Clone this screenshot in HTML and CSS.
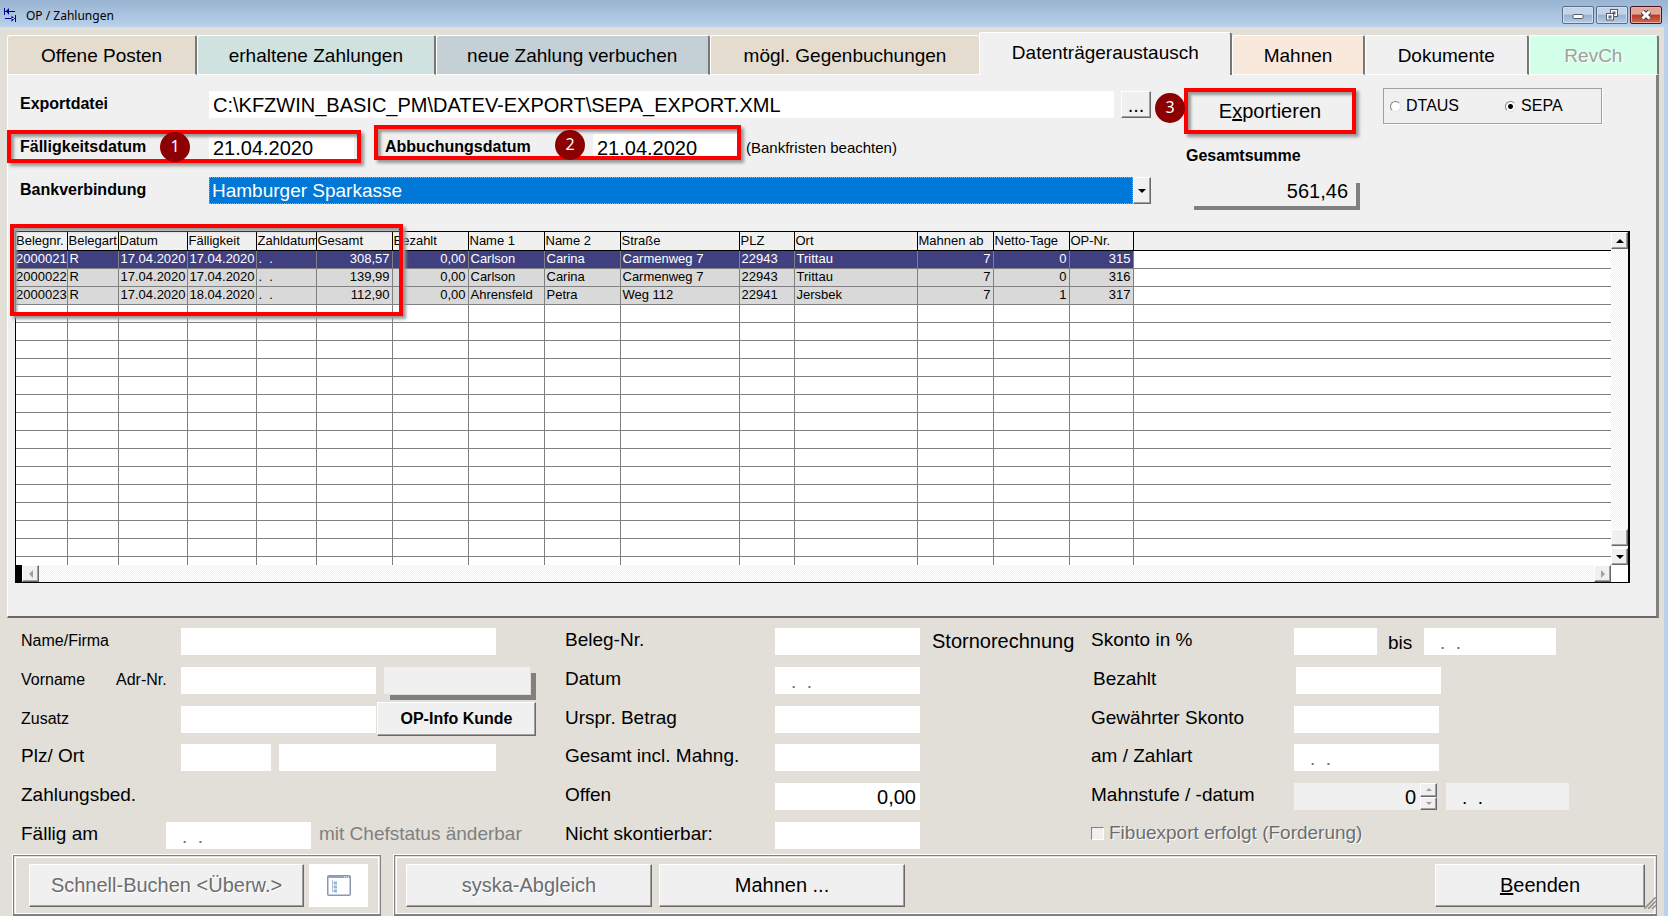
FILE: index.html
```html
<!DOCTYPE html>
<html lang="de">
<head>
<meta charset="utf-8">
<title>OP / Zahlungen</title>
<link rel="stylesheet" href="styles.css">
</head>
<body>
<header class="titlebar">
  <svg class="app-icon" viewBox="0 0 14 14" width="14" height="14" fill="#00008b">
    <path d="M1 0h1v7H1zM2 3h10v1H2zM3 3l3-3v7zM12 7h1v7h-1zM2 10h10v1H2zM11.500 10.500l-3-3v6.500z"/>
  </svg>
  <h1 class="title">OP / Zahlungen</h1>
  <div class="win-buttons">
    <button class="win" aria-label="Minimieren"><svg width="12" height="10" viewBox="0 0 12 10"><rect x="1" y="4.500" width="10" height="4" rx="1" fill="#fff" stroke="#555b6b"/></svg></button>
    <button class="win" aria-label="Wiederherstellen"><svg width="14" height="12" viewBox="0 0 14 12" fill="#fff" stroke="#555b6b"><rect x="5.500" y=".5" width="7" height="7"/><rect x="8" y="3" width="2" height="2" fill="#8fa9c8"/><rect x="1.500" y="4.500" width="7" height="6.500"/><rect x="4" y="7" width="2" height="2" fill="#8fa9c8"/></svg></button>
    <button class="win win-close" aria-label="Schließen"><svg width="12" height="10" viewBox="0 0 12 10"><path d="M2.500 1.500l7 7M9.500 1.500l-7 7" stroke="#4a3a48" stroke-width="5"/><path d="M2.500 1.500l7 7M9.500 1.500l-7 7" stroke="#fff" stroke-width="3"/></svg></button>
  </div>
</header>

<main class="window">
  <nav class="tabs" role="tablist">
    <button role="tab" class="tab sand">Offene Posten</button>
    <button role="tab" class="tab teal">erhaltene Zahlungen</button>
    <button role="tab" class="tab steel">neue Zahlung verbuchen</button>
    <button role="tab" class="tab sand no-edge">mögl. Gegenbuchungen</button>
    <button role="tab" class="tab active" aria-selected="true">Datenträgeraustausch</button>
    <button role="tab" class="tab peach">Mahnen</button>
    <button role="tab" class="tab plain">Dokumente</button>
    <button role="tab" class="tab mint" disabled>RevCh</button>
  </nav>

  <section class="panel">
    <div class="export">
      <div class="export-fields">
        <div class="line">
          <label class="cap" for="datei">Exportdatei</label>
          <input class="field grow" id="datei" value="C:\KFZWIN_BASIC_PM\DATEV-EXPORT\SEPA_EXPORT.XML">
          <button class="btn browse">...</button>
        </div>
        <div class="line">
          <div class="mark mark-due">
            <label class="cap" for="faellig">Fälligkeitsdatum</label>
            <input class="field date" id="faellig" value="21.04.2020">
            <span class="badge">1</span>
          </div>
          <div class="mark mark-debit">
            <label class="cap cap-debit" for="abbuchung">Abbuchungsdatum</label>
            <input class="field date" id="abbuchung" value="21.04.2020">
            <span class="badge">2</span>
          </div>
          <span class="hint">(Bankfristen beachten)</span>
        </div>
        <div class="line">
          <label class="cap" for="bank">Bankverbindung</label>
          <div class="combo">
            <select id="bank"><option>Hamburger Sparkasse</option></select>
            <span class="btn combo-arrow"><svg width="8" height="4"><path d="M0 0h8l-4 4z"/></svg></span>
          </div>
        </div>
      </div>
      <div class="export-side">
        <div class="side-top">
          <div class="mark mark-export">
            <button class="btn export-btn">E<u>x</u>portieren</button>
            <span class="badge">3</span>
          </div>
          <fieldset class="format">
            <label><input type="radio" name="format">DTAUS</label>
            <label><input type="radio" name="format" checked>SEPA</label>
          </fieldset>
        </div>
        <label class="sum-label" for="summe">Gesamtsumme</label>
        <output class="sum" id="summe">561,46</output>
      </div>
    </div>

    <div class="mark mark-grid">
      <div class="grid">
        <div class="grid-view">
          <table>
            <colgroup id="cols"></colgroup>
            <thead><tr id="head"></tr></thead>
            <tbody id="rows"></tbody>
          </table>
          <div class="vscroll">
            <span class="btn sb"><svg width="8" height="4"><path d="M0 4h8l-4-4z"/></svg></span>
            <span class="btn sb thumb"></span>
            <span class="btn sb"><svg width="8" height="4"><path d="M0 0h8l-4 4z"/></svg></span>
          </div>
        </div>
        <div class="hscroll">
          <span class="split"></span>
          <span class="btn sb"><svg width="4" height="8" fill="#a0a0a0"><path d="M4 0v8l-4-4z"/></svg></span>
          <span class="track"></span>
          <span class="btn sb"><svg width="4" height="8" fill="#a0a0a0"><path d="M0 0v8l4-4z"/></svg></span>
          <span class="corner"></span>
        </div>
      </div>
    </div>
  </section>

  <form class="details">
    <div class="col left">
      <div class="row"><label class="small" for="name">Name/Firma</label><input class="field w-name" id="name"></div>
      <div class="row"><label class="small first" for="vorname">Vorname</label><label class="small second" for="adr">Adr-Nr.</label><input class="field w-first" id="vorname"><input class="raised" id="adr" readonly></div>
      <div class="row"><label class="small" for="zusatz">Zusatz</label><input class="field w-first" id="zusatz"><button type="button" class="btn info">OP-Info Kunde</button></div>
      <div class="row"><label for="plz">Plz/ Ort</label><input class="field w-plz" id="plz"><input class="field w-ort" aria-label="Ort"></div>
      <div class="row"><span class="lbl">Zahlungsbed.</span></div>
      <div class="row"><label class="short" for="fam">Fällig am</label><input class="field dots w-date" id="fam" value=".  ."><span class="note">mit Chefstatus änderbar</span></div>
    </div>
    <div class="col middle">
      <div class="row"><label for="beleg">Beleg-Nr.</label><input class="field w-date" id="beleg"><span class="storno">Stornorechnung</span></div>
      <div class="row"><label for="datum">Datum</label><input class="field dots w-date" id="datum" value=".  ."></div>
      <div class="row"><label for="urspr">Urspr. Betrag</label><input class="field w-date" id="urspr"></div>
      <div class="row"><label for="gesamt">Gesamt incl. Mahng.</label><input class="field w-date" id="gesamt"></div>
      <div class="row"><label for="offen">Offen</label><input class="field w-date num" id="offen" value="0,00"></div>
      <div class="row"><label for="nicht">Nicht skontierbar:</label><input class="field w-date" id="nicht"></div>
    </div>
    <div class="col right">
      <div class="row"><label for="skonto">Skonto in %</label><input class="field w-pct" id="skonto"><label class="until" for="bis">bis</label><input class="field dots w-until" id="bis" value=".  ."></div>
      <div class="row paid"><label for="bezahlt">Bezahlt</label><input class="field w-date" id="bezahlt"></div>
      <div class="row"><label for="gew">Gewährter Skonto</label><input class="field w-date" id="gew"></div>
      <div class="row"><label for="zahlart">am / Zahlart</label><input class="field dots w-date" id="zahlart" value=".  ."></div>
      <div class="row"><label for="stufe">Mahnstufe / -datum</label><input class="field grey num w-level" id="stufe" value="0"><span class="spin"><span class="btn"><svg width="6" height="3" fill="#a0a0a0"><path d="M0 3h6l-3-3z"/></svg></span><span class="btn"><svg width="6" height="3" fill="#a0a0a0"><path d="M0 0h6l-3 3z"/></svg></span></span><input class="field grey dots dark w-mdate" aria-label="Mahndatum" value=".  ."></div>
      <div class="row"><label class="check"><input type="checkbox" disabled>Fibuexport erfolgt (Forderung)</label></div>
    </div>
  </form>

  <footer class="actions">
    <div class="frame frame-a">
      <button class="btn big quick" disabled>Schnell-Buchen &lt;Überw.&gt;</button>
      <button class="icon-btn" aria-label="Liste"><svg width="24" height="21" viewBox="0 0 24 21"><rect x=".75" y=".75" width="22.500" height="19.500" rx="1" fill="#fff" stroke="#8b98b0" stroke-width="1.500"/><path d="M1 2h22" stroke="#93a1ba" stroke-width="2"/><path d="M17 2h1M19 2h1M21 2h1" stroke="#fff"/><path d="M5.500 5v12M5.500 8h3M5.500 12h3M5.500 16h3" stroke="#b4bdcc" fill="none"/><path d="M7 6.500h3v3H7zM7 10.500h3v3H7zM7 14.500h3v3H7z" fill="#8fbbe0"/></svg></button>
    </div>
    <div class="frame frame-b">
      <button class="btn big" disabled>syska-Abgleich</button>
      <button class="btn big">Mahnen ...</button>
      <button class="btn big quit"><u>B</u>eenden</button>
      <svg class="grip" width="12" height="12" viewBox="0 0 12 12" stroke="#8a8a8a" stroke-width="1.500"><path d="M0 12L12 0M4 12l8-8M8 12l4-4"/></svg>
    </div>
  </footer>
</main>
<script src="app.js"></script>
</body>
</html>
```
FILE: styles.css
```css
* { box-sizing: border-box; }
body {
  margin: 0;
  min-height: 100vh;
  display: flex;
  flex-direction: column;
  background: #b9d1ea;
  color: #000;
  font-family: "Liberation Sans", Arial, sans-serif;
  font-size: 19px;
}
button, input, select { font: inherit; color: inherit; margin: 0; border-radius: 0; }
label, span, button { white-space: nowrap; }

.titlebar {
  display: flex;
  align-items: center;
  height: 27px;
  padding: 3px 6px 0 3px;
  background: linear-gradient(#99b4d1, #b9d1ea);
}
.title { flex: 1; margin: 0 0 0 9px; font: 12px "Noto Sans", sans-serif; }
.win-buttons { display: flex; gap: 2px; }
.win {
  width: 32px;
  height: 18px;
  padding: 0;
  display: flex;
  align-items: center;
  justify-content: center;
  border: 1px solid #5d6f88;
  border-radius: 2px;
  background: linear-gradient(#c3d4e8 45%, #98b1cf 50%, #b4cce6);
  box-shadow: inset 0 0 0 1px #cfdeef;
}
.win-close {
  border-color: #4b1520;
  background: linear-gradient(#e3a598 45%, #b83a23 50%, #cf6a50);
  box-shadow: inset 0 0 0 1px #e5afa4;
}

.window {
  flex: 1;
  display: flex;
  flex-direction: column;
  margin-right: 4px;
  background: #e1dfd8;
}
.tabs {
  display: grid;
  grid-template-columns: 190fr 238fr 274fr 269fr 253fr 132fr 164fr 130fr;
  align-items: end;
  height: 48px;
  padding: 0 5px 0 7px;
}
.tab {
  height: 40px;
  padding: 2px 0 0;
  border: 1px solid #fff;
  border-right: 2px solid #777;
  border-radius: 3px 3px 0 0;
  overflow: hidden;
}
.sand { background: #e3dccf; }
.teal { background: #cfe2e0; }
.steel { background: #c5cfd6; }
.peach { background: #f9e9dc; }
.plain { background: #f0f0f0; }
.mint { background: #d4ffe9; }
.no-edge { border-right: 0; }
.active { height: 43px; padding: 0 0 2px; border-bottom: 0; background: #f0f0f0; }
.tab:disabled { color: #a0a0a0; text-shadow: 1px 1px #fff; }

.panel {
  margin: 0 5px 0 7px;
  padding: 12px 26px 33px 7px;
  background: #f0f0f0;
  border-left: 1px solid #fff;
  border-right: 3px solid #808080;
  border-bottom: 2px solid #696969;
}
.export { display: flex; gap: 33px; padding-right: 28px; }
.export-fields {
  flex: 1;
  display: flex;
  flex-direction: column;
  gap: 16px;
  padding: 4px 0 27px 5px;
}
.line { display: flex; align-items: center; height: 27px; }
.cap { width: 189px; padding-bottom: 2px; font-size: 16px; font-weight: bold; }
.field {
  height: 27px;
  padding: 1px 4px 0;
  border: 0;
  background: #fff;
  min-width: 0;
}
.export-fields .field, .num { font-size: 20px; }
.grow { flex: 1; }
.date { width: 145px; }
.num { text-align: right; }
.btn {
  padding: 0;
  background: #f0f0f0;
  border: 1px solid #fff;
  border-right-color: #696969;
  border-bottom-color: #696969;
  box-shadow: inset -1px -1px #a0a0a0;
}
.btn:disabled { color: #6d6d6d; text-shadow: 1px 1px #fff; }
.browse { width: 30px; height: 27px; margin-left: 7px; font-size: 20px; line-height: 20px; }

/* Highlight frames with numbered markers */
.mark { position: relative; display: flex; align-items: center; }
.mark::after {
  content: "";
  position: absolute;
  inset: -4px -7px -2px -13px;
  border: 4px solid #f00;
  box-shadow: 3px 3px 3px #999, inset 3px 3px 3px #999;
  pointer-events: none;
}
.mark-debit { margin-left: 31px; }
.mark-debit::after { inset: -9px -3px 1px -11px; }
.cap-debit { width: 208px; }
.mark-export::after { inset: 0; }
.mark-grid::after { inset: -7px auto auto -5px; width: 385px; height: 84px; }
.badge {
  position: absolute;
  z-index: 1;
  left: 140px;
  top: -2px;
  width: 30px;
  height: 30px;
  border-radius: 50%;
  background: #8b0000;
  color: #fff;
  font: 16px/29px "Noto Sans", sans-serif;
  text-align: center;
}
.mark-debit .badge { left: 170px; top: -4px; }
.mark-export .badge { left: -29px; top: 5px; }
.hint { margin-left: 8px; font-size: 15px; line-height: 30px; }

.combo { flex: 1; display: flex; }
.combo select {
  flex: 1;
  height: 27px;
  padding: 0 2px;
  appearance: none;
  border: 1px dotted #e09040;
  background: #0078d7;
  color: #fff;
}
.combo-arrow { width: 18px; height: 27px; display: flex; align-items: center; justify-content: center; }

.export-side { width: 418px; padding-top: 1px; display: flex; flex-direction: column; align-items: flex-start; }
.side-top { display: flex; align-items: flex-start; gap: 27px; width: 100%; }
.export-btn { width: 172px; height: 46px; font-size: 20px; }
.format {
  flex: 1;
  display: flex;
  align-items: center;
  gap: 46px;
  height: 36px;
  margin: 0;
  padding: 0 6px;
  border: 1px solid #a0a0a0;
  box-shadow: 1px 1px #fff;
  font-size: 16px;
}
.format label { display: flex; align-items: center; gap: 5px; }
.format input {
  appearance: none;
  width: 11px;
  height: 11px;
  border: 1px solid #808080;
  border-right-color: #e3e3e3;
  border-bottom-color: #e3e3e3;
  border-radius: 50%;
  background: #fff;
}
.format input:checked { background: radial-gradient(circle, #000 2px, #fff 3px); }
.sum-label { margin: 12px 0 0 2px; font-size: 16px; font-weight: bold; line-height: 20px; }
.sum {
  width: 166px;
  height: 27px;
  margin: 11px 0 0 4px;
  padding: 0 6px;
  background: #f0f0f0;
  font-size: 20px;
  line-height: 28px;
  text-align: right;
  box-shadow: 2px 2px #f0f0f0, 6px 6px #808080;
}

.grid { flex: 1; min-width: 0; border: 1px solid #000; border-right-width: 2px; background: #fff; }
.grid-view { display: flex; }
table {
  flex: 1;
  width: 0;
  table-layout: fixed;
  border-collapse: collapse;
  font-size: 13px;
  line-height: 16px;
}
th, td { height: 18px; padding: 0 2px; overflow: hidden; white-space: pre; text-align: left; }
th { padding: 0 1px; font-weight: normal; background: #f0f0f0; border-right: 1px solid #000; border-bottom: 1px solid #000; }
td { border-right: 1px solid #808080; border-bottom: 1px solid #808080; }
th:last-child, td:last-child { border-right: 0; }
td:first-child, th:first-child { padding-left: 0; }
.r { text-align: right; }
.data td { background: #d9d9d9; }
.data.sel td { background: #403f7f; color: #fff; }
.data td:last-child { background: #fff; }
.cut td { height: 9px; border-bottom: 0; }
.vscroll { width: 17px; display: flex; flex-direction: column; }
.vscroll, .hscroll { background: repeating-conic-gradient(#fff 0 25%, #f0f0f0 0 50%) 0 0 / 2px 2px; }
.sb { width: 17px; height: 17px; display: flex; align-items: center; justify-content: center; }
.thumb { margin: auto 0 2px; }
.hscroll { display: flex; height: 17px; }
.split { width: 6px; background: #000; }
.track { flex: 1; }
.corner { width: 17px; background: #fff; }

.details {
  flex: 1;
  display: grid;
  grid-template-columns: 544fr 526fr 573fr;
  padding: 4px 0 0 21px;
}
.col { display: grid; grid-template-rows: repeat(6, 1fr); }
.row { display: flex; align-items: center; }
.row label, .lbl { width: 160px; padding-bottom: 3px; }
.row .small { font-size: 16px; padding-bottom: 1px; }
.row .first { width: 95px; }
.row .second { width: 65px; }
.row .short { width: 145px; }
.middle .row label { width: 210px; }
.right .row label { width: 203px; }
.paid { padding-left: 2px; }
.w-name { width: 315px; }
.w-first { width: 195px; }
.w-plz { width: 90px; margin-right: 8px; }
.w-ort { width: 217px; }
.w-date { width: 145px; }
.w-pct { width: 83px; }
.w-until { width: 132px; }
.w-level { width: 126px; }
.w-mdate { width: 123px; margin-left: 9px; }
.raised {
  width: 146px;
  height: 27px;
  margin-left: 8px;
  border: 0;
  background: #f0f0f0;
  box-shadow: 1px 1px #e1dfd8, 6px 6px #808080;
}
.info { width: 159px; height: 34px; margin-left: 1px; font-size: 16px; font-weight: bold; position: relative; }
.dots { padding: 3px 4px 0 16px; color: #6d6d6d; }
.dark { color: #000; }
.grey { background: #f0f0f0; }
.note { margin-left: 8px; padding-bottom: 3px; color: #808080; }
.storno { margin-left: 12px; font-size: 20px; }
.right .row .until { width: 47px; padding: 4px 0 0 11px; }
.spin { display: flex; flex-direction: column; width: 17px; height: 27px; }
.spin .btn { flex: 1; display: flex; align-items: center; justify-content: center; }
.right .row .check { display: flex; align-items: center; gap: 5px; width: auto; padding-bottom: 5px; color: #6d6d6d; text-shadow: 1px 1px #fff; }
.check input {
  appearance: none;
  width: 13px;
  height: 13px;
  border: 1px solid #808080;
  border-right-color: #fff;
  border-bottom-color: #fff;
  background: #f0f0f0;
}

.actions { display: flex; gap: 13px; padding: 0 7px 0 13px; }
.frame {
  position: relative;
  display: flex;
  align-items: center;
  height: 61px;
  border: 1px solid #808080;
  border-bottom-width: 2px;
  outline: 1px solid #fff;
  outline-offset: -3px;
  box-shadow: -1px -1px #fff;
}
.frame-a { width: 368px; padding: 0 12px 0 15px; gap: 5px; }
.frame-b { flex: 1; padding: 0 11px; gap: 7px; }
.big { width: 246px; height: 43px; font-size: 20px; }
.quick { width: 275px; }
.quit { width: 210px; margin-left: auto; }
.icon-btn { flex: 1; height: 43px; padding: 0; border: 0; background: #fff; display: flex; align-items: center; justify-content: center; }
.grip { position: absolute; right: 0; bottom: 5px; }
```
FILE: app.js
```js
const columns = [
  ["Belegnr.", 51], ["Belegart", 51], ["Datum", 69, 1], ["Fälligkeit", 69, 1], ["Zahldatum", 60],
  ["Gesamt", 76, 1], ["Bezahlt", 76, 1], ["Name 1", 76], ["Name 2", 76], ["Straße", 119], ["PLZ", 55],
  ["Ort", 123], ["Mahnen ab", 76, 1], ["Netto-Tage", 76, 1], ["OP-Nr.", 64, 1], ["", null]
];
const records = [
  ["2000021", "R", "17.04.2020", "17.04.2020", ".  .", "308,57", "0,00", "Carlson", "Carina", "Carmenweg 7", "22943", "Trittau", "7", "0", "315", ""],
  ["2000022", "R", "17.04.2020", "17.04.2020", ".  .", "139,99", "0,00", "Carlson", "Carina", "Carmenweg 7", "22943", "Trittau", "7", "0", "316", ""],
  ["2000023", "R", "17.04.2020", "18.04.2020", ".  .", "112,90", "0,00", "Ahrensfeld", "Petra", "Weg 112", "22941", "Jersbek", "7", "1", "317", ""]
];
const visibleRows = 18;

document.getElementById("cols").innerHTML = columns
  .map(c => c[1] ? `<col style="width:${c[1]}px">` : "<col>").join("");
document.getElementById("head").innerHTML = columns.map(c => `<th>${c[0]}</th>`).join("");

let html = "";
for (let i = 0; i < visibleRows; i++) {
  const rec = records[i];
  const cls = rec ? (i === 0 ? "data sel" : "data") : (i === visibleRows - 1 ? "cut" : "");
  html += `<tr class="${cls}">` + columns
    .map((c, n) => `<td${c[2] ? ' class="r"' : ""}>${rec ? rec[n] : ""}</td>`).join("") + "</tr>";
}
document.getElementById("rows").innerHTML = html;
```
